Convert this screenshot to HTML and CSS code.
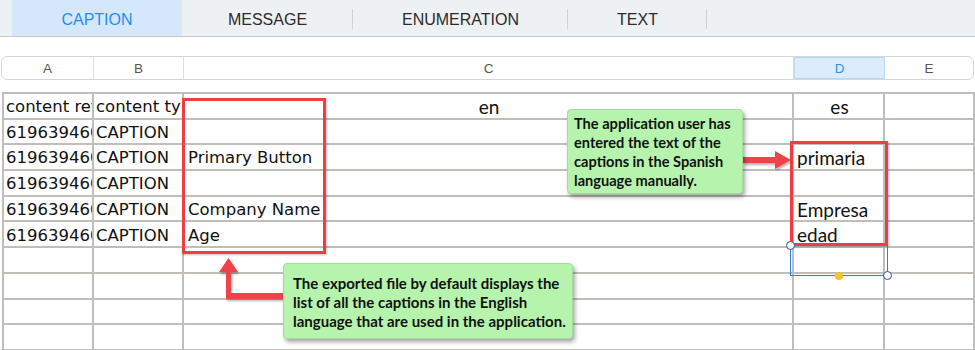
FILE: index.html
```html
<!DOCTYPE html>
<html>
<head>
<meta charset="utf-8">
<link rel="stylesheet" href="styles.css">
</head>
<body>
<div class="page">
  <div class="tabs">
    <div class="tab active">CAPTION</div>
    <div class="tab t-msg">MESSAGE</div>
    <div class="tab t-enum sep">ENUMERATION</div>
    <div class="tab t-text sep">TEXT</div>
    <div class="tab t-rest sep"></div>
  </div>

  <div class="colhead">
    <div class="ch ca">A</div>
    <div class="ch cb">B</div>
    <div class="ch cc">C</div>
    <div class="ch cd sel">D</div>
    <div class="ch ce">E</div>
  </div>

  <div class="sheet">
    <div class="row"><div class="c">content ref</div><div class="c">content type</div><div class="c"></div><div class="c">&nbsp;</div><div class="c"></div></div>
    <div class="row"><div class="c">619639460</div><div class="c">CAPTION</div><div class="c"></div><div class="c"></div><div class="c"></div></div>
    <div class="row"><div class="c">619639460</div><div class="c">CAPTION</div><div class="c">Primary Button</div><div class="c"></div><div class="c"></div></div>
    <div class="row"><div class="c">619639460</div><div class="c">CAPTION</div><div class="c"></div><div class="c"></div><div class="c"></div></div>
    <div class="row"><div class="c">619639460</div><div class="c">CAPTION</div><div class="c">Company Name</div><div class="c"></div><div class="c"></div></div>
    <div class="row"><div class="c">619639460</div><div class="c">CAPTION</div><div class="c">Age</div><div class="c"></div><div class="c"></div></div>
    <div class="row"><div class="c"></div><div class="c"></div><div class="c"></div><div class="c"></div><div class="c"></div></div>
    <div class="row"><div class="c"></div><div class="c"></div><div class="c"></div><div class="c"></div><div class="c"></div></div>
    <div class="row"><div class="c"></div><div class="c"></div><div class="c"></div><div class="c"></div><div class="c"></div></div>
    <div class="row"><div class="c"></div><div class="c"></div><div class="c"></div><div class="c"></div><div class="c"></div></div>
  </div>

  <div class="hdr hdr-en">en</div>
  <div class="hdr hdr-es">es</div>
  <div class="es es1">primaria</div>
  <div class="es es2">Empresa</div>
  <div class="es es3">edad</div>

  <div class="redbox rb1"></div>
  <div class="redbox rb2"></div>

  <div class="selbox"></div>
  <div class="handle h1"></div>
  <div class="handle h2"></div>
  <div class="dot"></div>

  <svg class="arrows" width="975" height="350" viewBox="0 0 975 350">
    <defs>
      <filter id="sh" x="-20%" y="-20%" width="140%" height="140%">
        <feDropShadow dx="1" dy="2" stdDeviation="1.2" flood-color="#000" flood-opacity="0.3"/>
      </filter>
    </defs>
    <g fill="#f0434a" filter="url(#sh)">
      <polygon points="743,157 775,157 775,151 791,160 775,169 775,163 743,163"/>
      <polygon points="283,293 231,293 231,272 238,272 228.5,258 219,272 226,272 226,299 283,299"/>
    </g>
  </svg>

  <div class="callout co1">The application user has<br>entered the text of the<br>captions in the Spanish<br>language manually.</div>
  <div class="callout co2">The exported file by default displays the<br>list of all the captions in the English<br>language that are used in the application.</div>
</div>
</body>
</html>
```

FILE: styles.css
```css
* { box-sizing: border-box; }
html, body { margin: 0; padding: 0; background: #fff; }
.page {
  position: relative;
  width: 975px;
  height: 350px;
  overflow: hidden;
  background: #fff;
}

/* tabs */
.tabs {
  display: flex;
  height: 37px;
  background: #eef1f4;
  border-bottom: 1px solid #c4c8cc;
  padding-left: 12px;
  font-family: "Liberation Sans", Arial, sans-serif;
  font-size: 16px;
  color: #2b2b2b;
}
.tab {
  position: relative;
  display: flex;
  align-items: center;
  justify-content: center;
  height: 36px;
  padding-top: 3px;
}
.tab.sep::before {
  content: "";
  position: absolute;
  left: -1px;
  top: 9px;
  height: 20px;
  width: 1px;
  background: #cfd3d7;
}
.tab.active { width: 170px; background: #d5e8fb; color: #1f8ef1; }
.t-msg { width: 171px; }
.t-enum { width: 215px; }
.t-text { width: 139px; }
.t-rest { flex: 1; }

/* column header */
.colhead {
  display: flex;
  margin: 19px 1px 0 1px;
  height: 24px;
  border: 1px solid #d6d6d6;
  border-radius: 6px;
  overflow: hidden;
  font-family: "Liberation Sans", Arial, sans-serif;
  font-size: 13.5px;
  color: #555;
}
.ch {
  display: flex;
  align-items: center;
  justify-content: center;
  border-right: 1px solid #e0e0e0;
}
.ca { width: 92px; }
.cb { width: 90px; }
.cc { width: 610px; }
.cd { width: 91px; }
.ce { flex: 1; border-right: none; }
.ch.sel { background: #dcecfb; color: #2f8fe6; border: 1px solid #b9d6f2; }

/* sheet */
.sheet {
  margin: 12px 0 0 2px;
  border-top: 2px solid #c1beb9;
  border-left: 2px solid #c1beb9;
  font-family: "DejaVu Sans", Verdana, sans-serif;
  font-size: 16.5px;
  color: #111;
}
.row {
  display: grid;
  grid-template-columns: 90px 90px 610px 91px 90px;
  height: 25.7px;
}
.c {
  border-right: 2px solid #c1beb9;
  border-bottom: 2px solid #c1beb9;
  overflow: hidden;
  white-space: nowrap;
  padding: 3px 0 0 2px;
  display: flex;
  align-items: center;
  line-height: 1;
}
.row .c:nth-child(3) { padding-left: 4px; }

/* calibri-like text overlays */
.hdr, .es {
  position: absolute;
  font-family: Lato, "Open Sans", sans-serif;
  font-size: 19px;
  color: #111;
  line-height: 1;
}
.hdr-en { left: 184px; width: 610px; top: 97px; text-align: center; }
.hdr-es { left: 794px; width: 91px; top: 97px; text-align: center; }
.es { left: 797px; }
.es1 { top: 148px; }
.es2 { top: 200px; }
.es3 { top: 225px; }

/* red highlight boxes */
.redbox {
  position: absolute;
  border: 3px solid #ef3d44;
  box-shadow: 1px 1px 2px rgba(0,0,0,0.25);
}
.rb1 { left: 182px; top: 98px; width: 144px; height: 156px; }
.rb2 { left: 790px; top: 141px; width: 98px; height: 105px; }

/* selection */
.selbox {
  position: absolute;
  left: 790px; top: 245px;
  width: 98px; height: 31px;
  border: 1.5px solid #2a83d6;
}
.handle {
  position: absolute;
  width: 9px; height: 9px;
  border-radius: 50%;
  background: #fff;
  border: 1.5px solid #2c4f8c;
}
.h1 { left: 785.5px; top: 240.5px; }
.h2 { left: 883px; top: 271px; }
.dot {
  position: absolute;
  left: 835px; top: 271.5px;
  width: 8px; height: 8px;
  border-radius: 50%;
  background: #f4c22a;
}

.arrows { position: absolute; left: 0; top: 0; }

/* callouts */
.callout {
  position: absolute;
  background: #b6f4ae;
  border: 1px solid #a2de9b;
  border-radius: 4px;
  box-shadow: 2px 3px 4px rgba(0,0,0,0.35);
  font-family: Lato, "Open Sans", sans-serif;
  font-weight: bold;
  font-size: 14.6px;
  line-height: 19px;
  color: #111;
  white-space: nowrap;
}
.co1 { left: 567px; top: 109px; width: 176px; height: 85px; padding: 4px 6px 0 6px; }
.co2 { left: 283px; top: 263px; width: 290px; height: 76px; padding: 10px 8px 0 9px; font-size: 15px; }
```
